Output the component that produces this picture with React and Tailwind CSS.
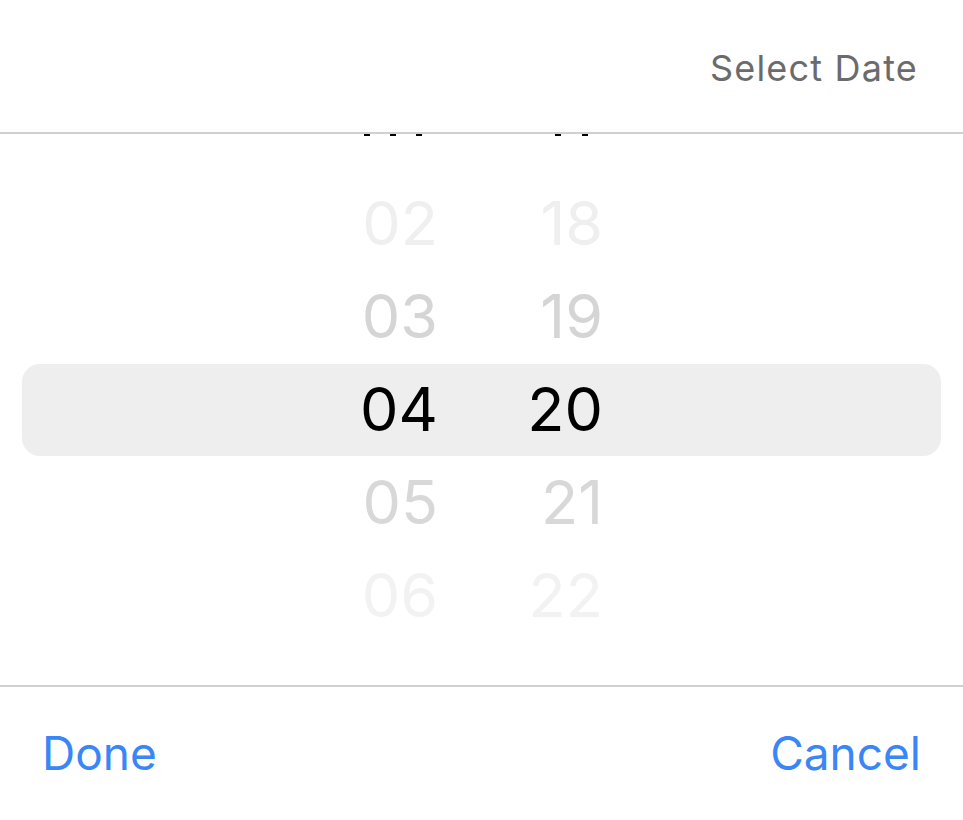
export default function App() {
  const font = { fontFamily: 'Inter, "Noto Sans", sans-serif' };

  const Row = ({ h, m, color }) => (
    <div className={`h-[93px] flex items-center pl-[338px] text-[61px] leading-none ${color}`}>
      <span className="w-[100px] text-right">{h}</span>
      <span className="w-[100px] ml-[65px] text-right">{m}</span>
    </div>
  );

  return (
    <div className="w-[963px] h-[820px] bg-white flex flex-col overflow-hidden" style={font}>
      <header className="h-[129px] pt-[3px] flex items-center justify-end pr-[45px] border-b-2 border-[#d0d0d0] box-content">
        <span className="text-[36px] text-[#6b6b6b] tracking-[1.2px]">Select Date</span>
      </header>

      <div className="h-[551px] flex flex-col">
        <div className="h-[2px] relative">
          <span className="absolute left-[364px] top-0 w-[6px] h-[2px] bg-black" />
          <span className="absolute left-[390px] top-0 w-[6px] h-[2px] bg-black" />
          <span className="absolute left-[416px] top-0 w-[6px] h-[2px] bg-black" />
          <span className="absolute left-[555px] top-0 w-[6px] h-[2px] bg-black" />
          <span className="absolute left-[582px] top-0 w-[6px] h-[2px] bg-black" />
        </div>
        <div className="mt-[41px]">
          <Row h="02" m="18" color="text-[#efefef]" />
          <Row h="03" m="19" color="text-[#d5d5d5]" />
          <div className="h-[93px] flex items-center">
            <div className="mx-[22px] w-full h-[92px] bg-[#eeeeee] rounded-[18px] flex items-center pl-[316px] text-[61px] leading-none text-black">
              <span className="w-[100px] text-right">04</span>
              <span className="w-[100px] ml-[65px] text-right">20</span>
            </div>
          </div>
          <Row h="05" m="21" color="text-[#d8d8d8]" />
          <Row h="06" m="22" color="text-[#f2f2f2]" />
        </div>
      </div>

      <footer className="flex-1 border-t-2 border-[#d0d0d0] flex items-center justify-between px-[42px]">
        <button className="text-[46px] text-[#3b86f7]">Done</button>
        <button className="text-[46px] text-[#3b86f7]">Cancel</button>
      </footer>
    </div>
  );
}
